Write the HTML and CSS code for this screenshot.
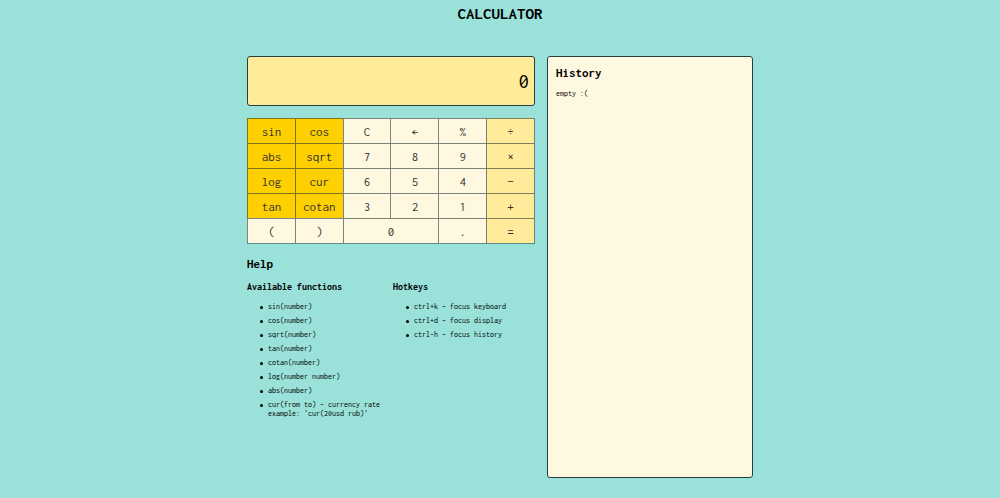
FILE: index.html
```html
<!DOCTYPE html>
<html lang="en">
<head>
<meta charset="utf-8">
<title>Calculator</title>
<link rel="stylesheet" href="styles.css">
</head>
<body>
<header class="header"><h1 class="title">CALCULATOR</h1></header>
<main class="layout">
  <div class="calculator">
    <input class="display" type="text" value="0" aria-label="Display">
    <div class="keyboard">
      <button class="key fn">sin</button><button class="key fn">cos</button><button class="key">C</button><button class="key">←</button><button class="key">%</button><button class="key op">÷</button>
      <button class="key fn">abs</button><button class="key fn">sqrt</button><button class="key">7</button><button class="key">8</button><button class="key">9</button><button class="key op">×</button>
      <button class="key fn">log</button><button class="key fn">cur</button><button class="key">6</button><button class="key">5</button><button class="key">4</button><button class="key op">−</button>
      <button class="key fn">tan</button><button class="key fn">cotan</button><button class="key">3</button><button class="key">2</button><button class="key">1</button><button class="key op">+</button>
      <button class="key">(</button><button class="key">)</button><button class="key wide">0</button><button class="key">.</button><button class="key op">=</button>
    </div>
    <section class="help">
      <h2 class="heading">Help</h2>
      <div class="columns">
        <section>
          <h3 class="subheading">Available functions</h3>
          <ul class="list">
            <li>sin(number)</li>
            <li>cos(number)</li>
            <li>sqrt(number)</li>
            <li>tan(number)</li>
            <li>cotan(number)</li>
            <li>log(number number)</li>
            <li>abs(number)</li>
            <li>cur(from to) – currency rate<br>example: 'cur(20usd rub)'</li>
          </ul>
        </section>
        <section>
          <h3 class="subheading">Hotkeys</h3>
          <ul class="list">
            <li>ctrl+k – focus keyboard</li>
            <li>ctrl+d – focus display</li>
            <li>ctrl-h – focus history</li>
          </ul>
        </section>
      </div>
    </section>
  </div>
  <aside class="history">
    <h2 class="heading">History</h2>
    <p class="empty">empty :(</p>
  </aside>
</main>
</body>
</html>
```
FILE: styles.css
```css
* {
  box-sizing: border-box;
}

body {
  margin: 0;
  min-height: 100vh;
  display: flex;
  flex-direction: column;
  background: #9ae1d9;
  color: #000;
  font-family: Inconsolata, "DejaVu Sans Mono", "Liberation Mono", monospace;
  font-size: 8px;
  line-height: 9px;
}

h1, h2, h3, p, ul {
  margin: 0;
}

.header {
  padding: 5px 0 34px;
  text-align: center;
}

.title {
  font-size: 17px;
  line-height: 17px;
}

.layout {
  flex: 1;
  display: grid;
  grid-template-columns: 288fr 206fr;
  gap: 12px;
  width: 100%;
  max-width: 506px;
  margin: 0 auto;
  padding-bottom: 20px;
}

.display {
  display: block;
  width: 100%;
  height: 50px;
  padding: 0 5px;
  border: 1px solid #26403f;
  border-radius: 3px;
  background: #ffeb99;
  color: #000;
  font: inherit;
  font-size: 21px;
  text-align: right;
}

.keyboard {
  display: grid;
  grid-template-columns: repeat(6, 1fr);
  grid-auto-rows: 25px;
  margin-top: 12px;
  border: solid #5d8a86;
  border-width: 0 1px 1px 0;
}

.key {
  min-width: 0;
  padding: 0;
  border: solid rgba(20, 40, 40, 0.55);
  border-width: 1px 0 0 1px;
  background: #fff8e1;
  color: #333;
  font: inherit;
  font-size: 13px;
}

.fn {
  background: #ffd000;
}

.op {
  background: #ffeb99;
}

.wide {
  grid-column: span 2;
}

.help {
  margin-top: 13px;
}

.heading {
  font-size: 13px;
  line-height: 14px;
}

.columns {
  display: grid;
  grid-template-columns: 146fr 142fr;
  margin-top: 10px;
}

.subheading {
  font-size: 10px;
  line-height: 11px;
}

.list {
  margin-top: 10px;
  padding-left: 13px;
  list-style: none;
}

.list li {
  display: grid;
  grid-template-columns: 3px 1fr;
  column-gap: 5px;
  margin-bottom: 5px;
}

.list li::before {
  content: "";
  grid-row: span 2;
  width: 3px;
  height: 3px;
  margin-top: 4px;
  border-radius: 50%;
  background: #000;
}

.history {
  padding: 9px 8px;
  border: 1px solid #26403f;
  border-radius: 3px;
  background: #fff8e1;
}

.empty {
  margin-top: 9px;
}
```
